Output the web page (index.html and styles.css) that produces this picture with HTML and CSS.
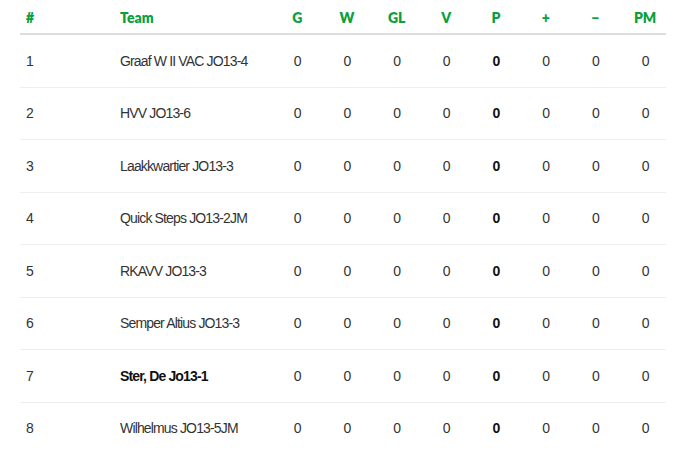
FILE: index.html
```html
<!DOCTYPE html>
<html lang="nl">
<head>
<meta charset="utf-8">
<title>Stand</title>
<link rel="stylesheet" href="styles.css">
</head>
<body>
<table class="standings">
  <colgroup>
    <col class="c-pos"><col class="c-team">
    <col class="c-stat"><col class="c-stat"><col class="c-stat"><col class="c-stat">
    <col class="c-stat"><col class="c-stat"><col class="c-stat"><col class="c-stat">
  </colgroup>
  <thead>
    <tr>
      <th class="pos">#</th><th class="team">Team</th>
      <th class="stat">G</th><th class="stat">W</th><th class="stat">GL</th><th class="stat">V</th>
      <th class="stat">P</th><th class="stat">+</th><th class="stat">&minus;</th><th class="stat">PM</th>
    </tr>
  </thead>
  <tbody>
    <tr><td class="pos">1</td><td class="team">Graaf W II VAC JO13-4</td><td class="stat">0</td><td class="stat">0</td><td class="stat">0</td><td class="stat">0</td><td class="stat pts">0</td><td class="stat">0</td><td class="stat">0</td><td class="stat">0</td></tr>
    <tr><td class="pos">2</td><td class="team">HVV JO13-6</td><td class="stat">0</td><td class="stat">0</td><td class="stat">0</td><td class="stat">0</td><td class="stat pts">0</td><td class="stat">0</td><td class="stat">0</td><td class="stat">0</td></tr>
    <tr><td class="pos">3</td><td class="team">Laakkwartier JO13-3</td><td class="stat">0</td><td class="stat">0</td><td class="stat">0</td><td class="stat">0</td><td class="stat pts">0</td><td class="stat">0</td><td class="stat">0</td><td class="stat">0</td></tr>
    <tr><td class="pos">4</td><td class="team">Quick Steps JO13-2JM</td><td class="stat">0</td><td class="stat">0</td><td class="stat">0</td><td class="stat">0</td><td class="stat pts">0</td><td class="stat">0</td><td class="stat">0</td><td class="stat">0</td></tr>
    <tr><td class="pos">5</td><td class="team">RKAVV JO13-3</td><td class="stat">0</td><td class="stat">0</td><td class="stat">0</td><td class="stat">0</td><td class="stat pts">0</td><td class="stat">0</td><td class="stat">0</td><td class="stat">0</td></tr>
    <tr><td class="pos">6</td><td class="team">Semper Altius JO13-3</td><td class="stat">0</td><td class="stat">0</td><td class="stat">0</td><td class="stat">0</td><td class="stat pts">0</td><td class="stat">0</td><td class="stat">0</td><td class="stat">0</td></tr>
    <tr class="own"><td class="pos">7</td><td class="team">Ster, De Jo13-1</td><td class="stat">0</td><td class="stat">0</td><td class="stat">0</td><td class="stat">0</td><td class="stat pts">0</td><td class="stat">0</td><td class="stat">0</td><td class="stat">0</td></tr>
    <tr><td class="pos">8</td><td class="team">Wilhelmus JO13-5JM</td><td class="stat">0</td><td class="stat">0</td><td class="stat">0</td><td class="stat">0</td><td class="stat pts">0</td><td class="stat">0</td><td class="stat">0</td><td class="stat">0</td></tr>
  </tbody>
</table>
</body>
</html>
```

FILE: styles.css
```css
html, body {
  margin: 0;
  padding: 0;
  background: #fff;
}
body {
  padding: 0 18px 0 20px;
  font-family: "Liberation Sans", Arial, sans-serif;
  font-size: 14px;
  color: #333;
}
.standings {
  width: 646px;
  border-collapse: collapse;
  table-layout: fixed;
}
.c-pos { width: 94px; }
.c-team { width: 154.4px; }
.c-stat { width: 49.7px; }

.standings th {
  height: 32px;
  padding: 1px 0 0;
  font-family: Lato, "Liberation Sans", sans-serif;
  font-weight: 800;
  font-size: 14px;
  color: #0c9f3d;
  border-bottom: 2px solid #ddd;
  vertical-align: middle;
}
.standings td {
  height: 51.5px;
  padding: 0;
  font-family: "Liberation Sans", Arial, sans-serif;
  font-size: 14px;
  letter-spacing: -0.85px;
  color: #333;
  border-bottom: 1px solid #eee;
  vertical-align: middle;
}
.standings .pos { text-align: left; padding-left: 6px; }
.standings .team { text-align: left; padding-left: 6px; }
.standings .stat { text-align: center; padding-left: 8px; padding-right: 0; }
.standings .pts { font-weight: 700; color: #111; }
.standings .own .team { font-weight: 700; color: #111; }
```
